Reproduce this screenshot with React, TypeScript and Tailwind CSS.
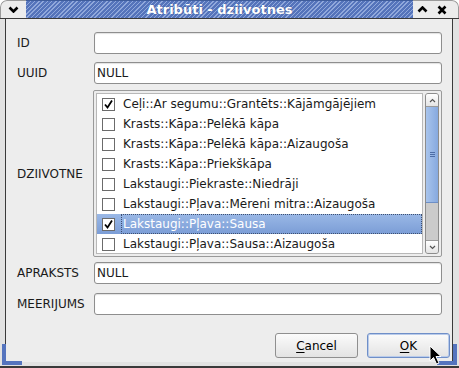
const items = [
  { label: 'Ceļi::Ar segumu::Grantēts::Kājāmgājējiem', checked: true },
  { label: 'Krasts::Kāpa::Pelēkā kāpa', checked: false },
  { label: 'Krasts::Kāpa::Pelēkā kāpa::Aizaugoša', checked: false },
  { label: 'Krasts::Kāpa::Priekškāpa', checked: false },
  { label: 'Lakstaugi::Piekraste::Niedrāji', checked: false },
  { label: 'Lakstaugi::Pļava::Mēreni mitra::Aizaugoša', checked: false },
  { label: 'Lakstaugi::Pļava::Sausa', checked: true, selected: true },
  { label: 'Lakstaugi::Pļava::Sausa::Aizaugoša', checked: false },
];

function Check({ checked }: { checked: boolean }) {
  return (
    <div className="w-[13px] h-[13px] border border-[#6b6b6b] bg-white flex items-center justify-center shrink-0">
      {checked && (
        <svg width="11" height="11" viewBox="0 0 11 11">
          <path d="M2 5.5 L4.5 8.5 L9 1.5" fill="none" stroke="#000" strokeWidth="1.8" />
        </svg>
      )}
    </div>
  );
}

function Field({ label, value }: { label: string; value?: string }) {
  return (
    <div className="flex items-center pl-[11px] pr-[10px] h-[22px]">
      <div className="w-[77px] text-[12px] text-[#1a1a1a]">{label}</div>
      <div className="flex-1 h-[22px] bg-white border border-[#8e8e8e] rounded-[3px] shadow-[inset_0_1px_1px_rgba(0,0,0,0.12)] flex items-center pl-[2px] text-[12px] text-[#1a1a1a]">
        {value}
      </div>
    </div>
  );
}

export default function App() {
  return (
    <div className="relative w-[459px] h-[368px] bg-[#e2e2e2] flex flex-col rounded-t-[7px] overflow-hidden border-b-2 border-[#3a3a3a] font-['DejaVu_Sans',sans-serif]">
      {/* title bar */}
      <div className="flex h-[19px] border-b border-[#3a3a3a] shrink-0">
        <div className="w-[26px] bg-[#ececec] rounded-tl-[7px] border-t border-l border-[#9a9a9a] flex items-center justify-center">
          <svg width="11" height="7" viewBox="0 0 11 7">
            <polyline points="1.5,1.5 5.5,5.5 9.5,1.5" fill="none" stroke="#000" strokeWidth="2.6" />
          </svg>
        </div>
        <div className="flex-1 flex items-center justify-center border-t border-[#3f5d9c] bg-[repeating-linear-gradient(135deg,#90a8db_0px,#90a8db_1px,#5574bb_1px,#5574bb_3px)]">
          <span className="text-white font-bold text-[13px] leading-none [text-shadow:0_0_1px_#3a5590]">Atribūti - dziivotnes</span>
        </div>
        <div className="w-[19px] bg-[#ececec] border-t border-[#9a9a9a] flex items-center justify-center">
          <svg width="11" height="7" viewBox="0 0 11 7">
            <polyline points="1.5,5.5 5.5,1.5 9.5,5.5" fill="none" stroke="#000" strokeWidth="2.6" />
          </svg>
        </div>
        <div className="w-[20px] bg-[#ececec] border-t border-[#9a9a9a] flex items-center justify-center">
          <svg width="10" height="10" viewBox="0 0 10 10">
            <path d="M1.5 1.5 L8.5 8.5 M8.5 1.5 L1.5 8.5" fill="none" stroke="#000" strokeWidth="2.6" />
          </svg>
        </div>
        <div className="w-[7px] bg-[#ececec] rounded-tr-[7px] border-t border-r border-[#9a9a9a]" />
      </div>

      {/* body */}
      <div className="flex-1 ml-[5px] mr-[6px] mb-[4px] border-x border-[#3a3a3a] bg-[#ededed] flex flex-col pt-[13px]">
        <Field label="ID" />
        <div className="h-[8px]" />
        <Field label="UUID" value="NULL" />
        <div className="h-[6px]" />

        <div className="flex items-center pl-[11px] pr-[10px] h-[167px]">
          <div className="w-[76px] text-[12px] text-[#1a1a1a]">DZIIVOTNE</div>
          <div className="flex-1 h-full border border-[#9a9a9a] rounded-[2px] bg-[#ededed] p-[2px] flex gap-[2px]">
            <div className="flex-1 bg-white border border-[#b8b8b8] overflow-hidden">
              {items.map((it) => (
                <div
                  key={it.label}
                  className={
                    it.selected
                      ? 'h-[20px] flex items-center pl-[5px] bg-[linear-gradient(#9ab8e6,#7b9dd6)] text-white'
                      : 'h-[20px] flex items-center pl-[5px] text-[#1a1a1a]'
                  }
                >
                  <Check checked={it.checked} />
                  <div
                    className={
                      it.selected
                        ? 'ml-[6px] flex-1 h-full flex items-center pl-px border border-dotted border-[#3d4f70] text-[12px] whitespace-nowrap'
                        : 'ml-[6px] flex-1 h-full flex items-center pl-[2px] text-[12px] whitespace-nowrap'
                    }
                  >
                    {it.label}
                  </div>
                </div>
              ))}
            </div>
            {/* scrollbar */}
            <div className="w-[14px] flex flex-col border border-[#8c8c8c] rounded-[3px] bg-[#cbcbcb] overflow-hidden">
              <div className="h-[13px] bg-[linear-gradient(#ffffff,#e4e4e4)] border-b border-[#9a9a9a] flex items-center justify-center">
                <svg width="7" height="5" viewBox="0 0 7 5">
                  <polyline points="1,4 3.5,1.5 6,4" fill="none" stroke="#555" strokeWidth="1.2" />
                </svg>
              </div>
              <div className="h-[96px] bg-[linear-gradient(90deg,#a8c4ec,#86a9df)] border-b border-[#6d8fc6] flex items-center justify-center">
                <svg width="5" height="7" viewBox="0 0 5 7">
                  <path d="M0 1.5 H5 M0 3.5 H5 M0 5.5 H5" stroke="#4d6da6" strokeWidth="1" />
                </svg>
              </div>
              <div className="flex-1" />
              <div className="h-[13px] bg-[linear-gradient(#ffffff,#e4e4e4)] border-t border-[#9a9a9a] flex items-center justify-center">
                <svg width="7" height="5" viewBox="0 0 7 5">
                  <polyline points="1,1 3.5,3.5 6,1" fill="none" stroke="#555" strokeWidth="1.2" />
                </svg>
              </div>
            </div>
          </div>
        </div>

        <div className="h-[5px]" />
        <Field label="APRAKSTS" value="NULL" />
        <div className="h-[9px]" />
        <Field label="MEERIJUMS" />

        <div className="flex justify-end gap-[9px] pr-[2px] mt-[18px]">
          <button className="w-[83px] h-[25px] rounded-[3px] border border-[#8f8f8f] bg-[linear-gradient(#fbfbfb,#e3e3e3)] text-[12px] text-black">
            <span className="underline underline-offset-2">C</span>ancel
          </button>
          <button className="w-[83px] h-[25px] rounded-[3px] border border-[#6f8fc8] bg-[linear-gradient(#fbfbfb,#e3e3e3)] shadow-[inset_0_0_0_1px_#b9cbea] text-[12px] text-black">
            <span className="underline underline-offset-2">O</span>K
          </button>
        </div>
      </div>

      {/* resize corners */}
      <div className="absolute left-[2px] bottom-[1px] w-[20px] h-[21px] border-l-4 border-b-4 border-[#5574be]" />
      <div className="absolute right-[2px] bottom-[1px] w-[20px] h-[21px] border-r-4 border-b-4 border-[#5574be]" />

      {/* mouse pointer */}
      <svg className="absolute left-[429px] top-[345px]" width="14" height="21" viewBox="0 0 14 21">
        <path d="M1 1 L1 16 L4.5 12.5 L7.5 19 L10 18 L7 11.5 L12 11.5 Z" fill="#000" stroke="#fff" strokeWidth="1" />
      </svg>
    </div>
  );
}
